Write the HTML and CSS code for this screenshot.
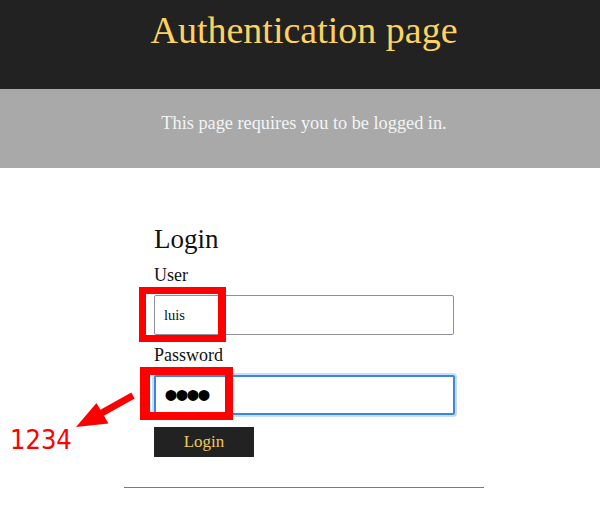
FILE: index.html
```html
<!DOCTYPE html>
<html lang="en">
<head>
<meta charset="utf-8">
<title>Authentication page</title>
<link rel="stylesheet" href="styles.css">
</head>
<body>
<header class="site-header">
  <h1 class="title">Authentication page</h1>
</header>
<section class="notice">
  <p class="notice-text">This page requires you to be logged in.</p>
</section>
<main class="content">
  <form class="login-form">
    <h2 class="form-title">Login</h2>
    <label class="field-label" for="user">User</label>
    <input class="field" id="user" type="text" value="luis">
    <label class="field-label" for="pass">Password</label>
    <input class="field field-focus" id="pass" type="password" value="1234">
    <button class="btn" type="button">Login</button>
  </form>
  <hr class="divider">
</main>
<div class="annot annot-user"></div>
<div class="annot annot-pass"></div>
<svg class="annot-arrow" viewBox="70 385 70 50" width="70" height="50" aria-hidden="true">
  <line x1="133" y1="395.5" x2="99" y2="414.5" stroke="#ff0000" stroke-width="7"/>
  <polygon points="76,427 96.5,403 108.5,423.5" fill="#ff0000"/>
</svg>
<span class="annot-note">1234</span>
</body>
</html>
```
FILE: styles.css
```css
html, body {
  margin: 0;
  padding: 0;
  background: #ffffff;
}
body {
  position: relative;
  width: 600px;
  height: 532px;
  overflow: hidden;
  font-family: "Liberation Serif", "Times New Roman", serif;
  color: #111;
}
.site-header {
  background: #222222;
  height: 89px;
  box-sizing: border-box;
  padding: 9px 0 0 8px;
}
.title {
  margin: 0;
  text-align: center;
  font-weight: normal;
  font-size: 38px;
  line-height: 42px;
  color: #fdd35f;
}
.notice {
  background: #a9a9a9;
  height: 79px;
  box-sizing: border-box;
  padding: 24px 0 0 8px;
}
.notice-text {
  margin: 0;
  text-align: center;
  font-size: 18.3px;
  line-height: 21px;
  color: #f2f5f5;
}
.content {
  padding-top: 56px;
}
.login-form {
  margin-left: 154px;
  width: 300px;
}
.form-title {
  margin: 0 0 10px;
  font-weight: normal;
  font-size: 27px;
  line-height: 31px;
  color: #111;
}
.field-label {
  display: block;
  font-size: 18px;
  line-height: 21px;
  margin-bottom: 9px;
  color: #111;
}
.field {
  display: block;
  box-sizing: border-box;
  width: 300px;
  height: 40px;
  margin: 0 0 10px;
  padding: 0 9px;
  border: 1px solid #8f8f9d;
  border-radius: 2px;
  background: #fff;
  font-family: "Liberation Serif", "Times New Roman", serif;
  font-size: 14.5px;
  color: #111;
  outline: none;
}
.field-focus {
  width: 301px;
  border: 2px solid #3b85e3;
  box-shadow: 0 0 0 2px #c8defa;
  padding-left: 8px;
  font-family: "Liberation Sans", sans-serif;
  font-size: 40px;
  letter-spacing: -3px;
  line-height: 36px;
  color: #000;
}
.btn {
  display: block;
  margin-top: 12px;
  width: 100px;
  height: 30px;
  border: 0;
  padding: 0;
  background: #222222;
  color: #f0c95c;
  font-family: "Liberation Serif", "Times New Roman", serif;
  font-size: 17px;
}
.divider {
  margin: 30px 0 0 124px;
  width: 360px;
  border: 0;
  border-top: 1px solid #7a7a7a;
  height: 0;
}
.annot {
  position: absolute;
  box-sizing: border-box;
  border: 7px solid #ff0000;
}
.annot-user {
  left: 139px;
  top: 287px;
  width: 87px;
  height: 55px;
  border-right-width: 8px;
}
.annot-pass {
  left: 140px;
  top: 367px;
  width: 93px;
  height: 53px;
  border-width: 8px 8px 8px 10px;
}
.annot-arrow {
  position: absolute;
  left: 70px;
  top: 385px;
}
.annot-note {
  position: absolute;
  left: 10px;
  top: 422px;
  font-family: "DejaVu Sans Condensed", "DejaVu Sans", sans-serif;
  font-stretch: condensed;
  font-size: 27px;
  line-height: 36px;
  color: #ff0000;
}
```
